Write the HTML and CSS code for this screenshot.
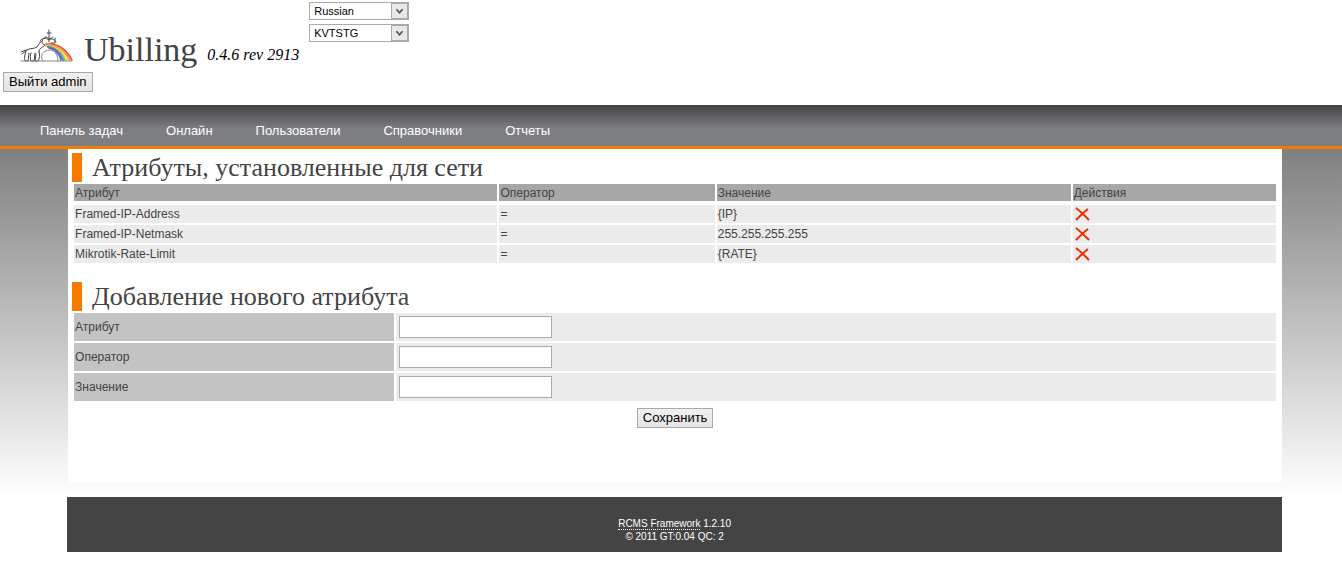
FILE: index.html
```html
<!DOCTYPE html>
<html lang="ru">
  <head>
    <meta charset="UTF-8" />
    <meta name="viewport" content="width=device-width, initial-scale=1.0" />
    <title>Ubilling</title>
    <link rel="stylesheet" href="styles.css">
  </head>
  <body>
    <header class="header">
      <div class="brand">
        <div class="brand-line">
          <svg class="logo" viewBox="0 0 56 36" fill="none" stroke="#444" stroke-linecap="round">
            <path d="M27 16C40 15 48 22 53 32" stroke="#e0453c" stroke-width="1.500" />
            <path d="M27 17C39 16 46 23 51 32" stroke="#f5953c" stroke-width="2" />
            <path d="M27 18C38 18 44 24 48 32" stroke="#f3e04c" stroke-width="2" />
            <path d="M28 18C37 19 43 25 46 32" stroke="#7cc05a" stroke-width="1.500" />
            <path d="M29 19C36 20 41 25 44 32" stroke="#4d7fd0" stroke-width="2" />
            <path d="M30 20C36 21 40 26 42 32" stroke="#7a5ab8" stroke-width="1.500" />
            <path d="M30 2v12M28 5h4M27 9c2 2 5 2 7 0M21 13c3-4 6-3 9-1c3-2 5-1 7 2M24 11l3-2M36 10v5h-4" />
            <path d="M2 24l5-2M3 26l5-4c3-2 7-1 10-3c2-2 2-5 5-6M24 12c-2 2-1 4 2 5c-3 3-6 3-6 7" />
            <path d="M7 23c-1 3-2 7-1 10h3l1-8M12 25c-1 3-1 6 0 8h3l1-8M20 24c1 3 1 6-1 9h-3l1-7" />
            <path d="M24 33c-3-4-1-9 3-10c4-2 8-1 10 3c1 2 2 4 2 7M2 33h51" stroke="#888" />
          </svg>
          <h1 class="title">Ubilling</h1>
          <span class="version">0.4.6 rev 2913</span>
        </div>
        <button type="button" class="btn">Выйти admin</button>
      </div>
      <form class="switchers">
        <div class="select-box">
          <select class="select" aria-label="Language">
            <option>Russian</option>
          </select>
          <svg class="arrow" viewBox="0 0 17 16"><path d="M5 6l3.500 4l3.500-4" fill="none" stroke="#555" stroke-width="2" /></svg>
        </div>
        <div class="select-box">
          <select class="select" aria-label="Skin">
            <option>KVTSTG</option>
          </select>
          <svg class="arrow" viewBox="0 0 17 16"><path d="M5 6l3.500 4l3.500-4" fill="none" stroke="#555" stroke-width="2" /></svg>
        </div>
      </form>
    </header>
    <nav class="menu">
      <a href="#">Панель задач</a>
      <a href="#">Онлайн</a>
      <a href="#">Пользователи</a>
      <a href="#">Справочники</a>
      <a href="#">Отчеты</a>
    </nav>
    <div class="page">
      <main class="content">
        <h2>Атрибуты, установленные для сети</h2>
        <table class="list">
          <colgroup>
            <col class="col-attr">
            <col class="col-op">
            <col class="col-value">
            <col class="col-act">
          </colgroup>
          <thead>
            <tr>
              <th>Атрибут</th>
              <th>Оператор</th>
              <th>Значение</th>
              <th>Действия</th>
            </tr>
          </thead>
          <tbody>
            <tr>
              <td>Framed-IP-Address</td>
              <td>=</td>
              <td>{IP}</td>
              <td><a href="#" class="delete" aria-label="Удалить"><svg viewBox="0 0 16 16"><path d="M2 2c4 3 8 7 13 12M14 3C10 6 6 10 2 14" /></svg></a></td>
            </tr>
            <tr>
              <td>Framed-IP-Netmask</td>
              <td>=</td>
              <td>255.255.255.255</td>
              <td><a href="#" class="delete" aria-label="Удалить"><svg viewBox="0 0 16 16"><path d="M2 2c4 3 8 7 13 12M14 3C10 6 6 10 2 14" /></svg></a></td>
            </tr>
            <tr>
              <td>Mikrotik-Rate-Limit</td>
              <td>=</td>
              <td>{RATE}</td>
              <td><a href="#" class="delete" aria-label="Удалить"><svg viewBox="0 0 16 16"><path d="M2 2c4 3 8 7 13 12M14 3C10 6 6 10 2 14" /></svg></a></td>
            </tr>
          </tbody>
        </table>
        <h2>Добавление нового атрибута</h2>
        <form class="add-form">
          <table class="fields">
            <tr>
              <th><label for="attribute">Атрибут</label></th>
              <td><input type="text" id="attribute" name="attribute"></td>
            </tr>
            <tr>
              <th><label for="operator">Оператор</label></th>
              <td><input type="text" id="operator" name="operator"></td>
            </tr>
            <tr>
              <th><label for="value">Значение</label></th>
              <td><input type="text" id="value" name="value"></td>
            </tr>
          </table>
          <button type="submit" class="btn">Сохранить</button>
        </form>
      </main>
      <footer class="footer">
        <a href="#">RCMS Framework</a> 1.2.10<br>
        © 2011 GT:0.04 QC: 2
      </footer>
    </div>
  </body>
</html>
```
FILE: styles.css
```css
body {
  margin: 0;
  font-family: Arial, "Liberation Sans", sans-serif;
  font-size: 12px;
  color: #444;
  background: #fff;
}
.header {
  display: flex;
  align-items: flex-start;
  gap: 10px;
  height: 105px;
}
.brand {
  padding: 28px 0 0 3px;
}
.brand-line {
  display: flex;
  align-items: flex-start;
  height: 44px;
  padding-left: 16px;
}
.logo {
  width: 56px;
  height: 36px;
  margin-right: 9px;
}
.title {
  margin: 0;
  font-family: Georgia, "Liberation Serif", serif;
  font-size: 34px;
  line-height: 44px;
  font-weight: normal;
}
.version {
  margin-left: 10px;
  font-family: Georgia, "Liberation Serif", serif;
  font-size: 16px;
  line-height: 54px;
  font-style: italic;
  color: #000;
}
.btn {
  height: 20px;
  padding: 0 5px;
  border: 1px solid #a9a9a9;
  background: linear-gradient(#f0f0f0, #e4e4e4);
  font-family: Arial, "Liberation Sans", sans-serif;
  font-size: 13px;
  line-height: 18px;
  color: #000;
  cursor: pointer;
}
.switchers {
  display: flex;
  flex-direction: column;
  gap: 4px;
  padding-top: 2px;
}
.select-box {
  position: relative;
  width: 100px;
  height: 18px;
}
.select {
  appearance: none;
  display: block;
  width: 100%;
  height: 18px;
  padding: 0 20px 0 4px;
  border: 1px solid #a9a9a9;
  border-radius: 0;
  background: #fff;
  font-family: Arial, "Liberation Sans", sans-serif;
  font-size: 11px;
  color: #000;
}
.arrow {
  box-sizing: border-box;
  position: absolute;
  top: 1px;
  right: 1px;
  width: 17px;
  height: 16px;
  border: 1px solid #a9a9a9;
  background: #e8e8e8;
  pointer-events: none;
}
.menu {
  display: flex;
  gap: 43px;
  height: 41px;
  padding-left: 40px;
  border-bottom: 3px solid #f77900;
  background: linear-gradient(#444, #7d7e82 24px);
}
.menu a {
  font-size: 13px;
  line-height: 51px;
  color: #fff;
  text-decoration: none;
}
.page {
  padding-left: 5%;
  background: linear-gradient(#808080, #fff 348px);
}
.content {
  box-sizing: border-box;
  width: 95.3%;
  padding: 4px 4px 54px;
  border-left: 1px solid transparent;
  background: #fff;
  background-clip: padding-box;
}
h2 {
  margin: 0;
  padding-left: 10px;
  border-left: 10px solid #f77900;
  font-family: Georgia, "Liberation Serif", serif;
  font-size: 26px;
  line-height: 29px;
  font-weight: normal;
}
table {
  width: 100%;
  border-spacing: 2px;
  table-layout: fixed;
}
th,
td {
  padding: 0 1px;
  text-align: left;
  font-weight: normal;
}
td {
  background: #ebebeb;
}
.list {
  margin-bottom: 17px;
}
.list th {
  height: 17px;
  background: #a7a7a7;
}
.list td {
  height: 18px;
}
/* extra gap under the header row */
.list tbody::before {
  content: "";
  display: table-row;
}
.col-attr {
  width: 35.4%;
}
.col-op {
  width: 18%;
}
.col-value {
  width: 29.6%;
}
.delete svg {
  display: block;
  width: 16px;
  height: 16px;
  fill: none;
  stroke: #e62e00;
  stroke-width: 2;
}
.fields {
  margin-bottom: 5px;
}
.fields th {
  width: 318px;
  background: #c3c3c3;
}
.fields td {
  height: 28px;
}
.fields input {
  box-sizing: border-box;
  display: block;
  width: 153px;
  height: 22px;
  margin-left: 2px;
  padding: 1px 2px;
  border: 1px solid #a9a9a9;
  background: #fff;
}
.add-form .btn {
  display: block;
  margin: 0 auto;
}
.footer {
  box-sizing: border-box;
  width: 95.3%;
  margin-top: 15px;
  padding: 20px 0 9px;
  background: #444;
  font-size: 10px;
  line-height: 13px;
  text-align: center;
  color: #fff;
}
.footer a {
  border-bottom: 1px dotted #fff;
  color: #fff;
  text-decoration: none;
}
```
